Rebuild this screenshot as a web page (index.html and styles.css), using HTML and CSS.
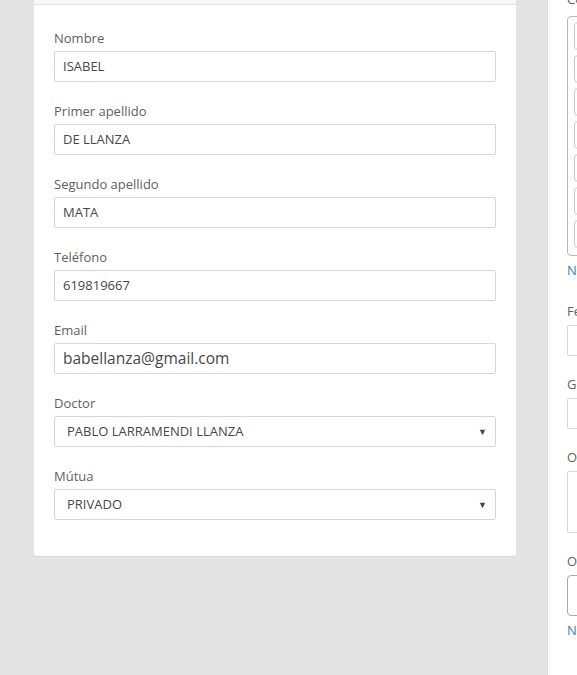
FILE: index.html
```html
<!DOCTYPE html>
<html lang="es">
<head>
<meta charset="utf-8">
<title>Paciente</title>
<link rel="stylesheet" href="styles.css">
</head>
<body>
<div class="page">
  <div class="gutter"></div>
  <section class="card">
    <div class="card-head"></div>
    <div class="card-body">
      <div class="field">
        <label class="lbl">Nombre</label>
        <div class="input">ISABEL</div>
      </div>
      <div class="field">
        <label class="lbl">Primer apellido</label>
        <div class="input">DE LLANZA</div>
      </div>
      <div class="field">
        <label class="lbl">Segundo apellido</label>
        <div class="input">MATA</div>
      </div>
      <div class="field">
        <label class="lbl">Teléfono</label>
        <div class="input">619819667</div>
      </div>
      <div class="field">
        <label class="lbl">Email</label>
        <div class="input email">babellanza@gmail.com</div>
      </div>
      <div class="field">
        <label class="lbl">Doctor</label>
        <div class="input select">PABLO LARRAMENDI LLANZA<span class="caret">▼</span></div>
      </div>
      <div class="field">
        <label class="lbl">Mútua</label>
        <div class="input select">PRIVADO<span class="caret">▼</span></div>
      </div>
    </div>
  </section>
  <aside class="side">
    <div class="side-lbl first">Consultas</div>
    <div class="slots">
      <div class="slot"></div>
      <div class="slot"></div>
      <div class="slot"></div>
      <div class="slot"></div>
      <div class="slot"></div>
      <div class="slot"></div>
      <div class="slot"></div>
    </div>
    <div class="side-link">Nueva consulta</div>
    <div class="side-lbl after-link">Fecha de nacimiento</div>
    <div class="side-input"></div>
    <div class="side-lbl">Género</div>
    <div class="side-input"></div>
    <div class="side-lbl">Observaciones</div>
    <div class="side-input area"></div>
    <div class="side-lbl">Otros</div>
    <div class="side-box"></div>
    <div class="side-link">Nuevo</div>
  </aside>
</div>
</body>
</html>
```
FILE: styles.css
```css
html, body {
  margin: 0;
  padding: 0;
  height: 100%;
  overflow: hidden;
}
body {
  background: #e4e4e4;
  font-family: "Open Sans", "Liberation Sans", sans-serif;
  color: #555;
}
.page {
  display: flex;
  align-items: flex-start;
  width: 900px;
  height: 100%;
}
.gutter {
  width: 34px;
  flex: none;
}
.card {
  width: 482px;
  flex: none;
  background: #fff;
  border-radius: 0 0 3px 3px;
  box-shadow: 0 1px 1px rgba(0,0,0,0.06);
}
.card-head {
  height: 4px;
  background: #f7f7f7;
  border-bottom: 1px solid #e2e2e2;
}
.card-body {
  padding: 0 20px 36px;
  display: flex;
  flex-direction: column;
}
.field {
  display: flex;
  flex-direction: column;
}
.lbl {
  font-size: 13px;
  line-height: 18px;
  color: #5f5f5f;
  margin-top: 20px;
  margin-bottom: 4px;
}
.field:first-child .lbl {
  margin-top: 24px;
}
.input {
  height: 29px;
  border: 1px solid #d3d6db;
  border-radius: 2px;
  padding: 0 12px 0 8px;
  font-size: 13px;
  line-height: 29px;
  color: #474747;
  display: flex;
  align-items: center;
}
.input.email {
  font-size: 15.5px;
}
.input.select {
  justify-content: space-between;
  padding-left: 12px;
  padding-right: 8px;
}
.caret {
  font-size: 9px;
  color: #444;
}
.side {
  margin-left: 31px;
  width: 260px;
  flex: none;
  align-self: stretch;
  background: #fff;
  border-left: 1px solid #dadada;
  padding-left: 19px;
  margin-top: -10px;
  font-size: 13px;
}
.side-lbl {
  color: #5f5f5f;
  line-height: 18px;
  margin-top: 19px;
  margin-bottom: 5px;
}
.side-lbl.first {
  margin-top: 0;
  margin-bottom: 8px;
}
.side-lbl.after-link {
  margin-top: 23px;
}
.slots {
  border: 1px solid #b7b7b7;
  border-radius: 4px;
  height: 240px;
  box-sizing: border-box;
  padding: 5px 6px;
  display: flex;
  flex-direction: column;
  gap: 5px;
}
.slot {
  height: 28px;
  border: 1px solid #c9c9c9;
  border-radius: 4px;
  box-sizing: border-box;
}
.side-link {
  color: #3c7fc1;
  line-height: 18px;
  margin-top: 5px;
}
.side-input {
  height: 31px;
  border: 1px solid #d3d6db;
  box-sizing: border-box;
  border-radius: 2px;
}
.side-input.area {
  height: 62px;
}
.side-box {
  height: 41px;
  border: 1px solid #a9a9a9;
  border-radius: 4px;
  box-sizing: border-box;
}
```
